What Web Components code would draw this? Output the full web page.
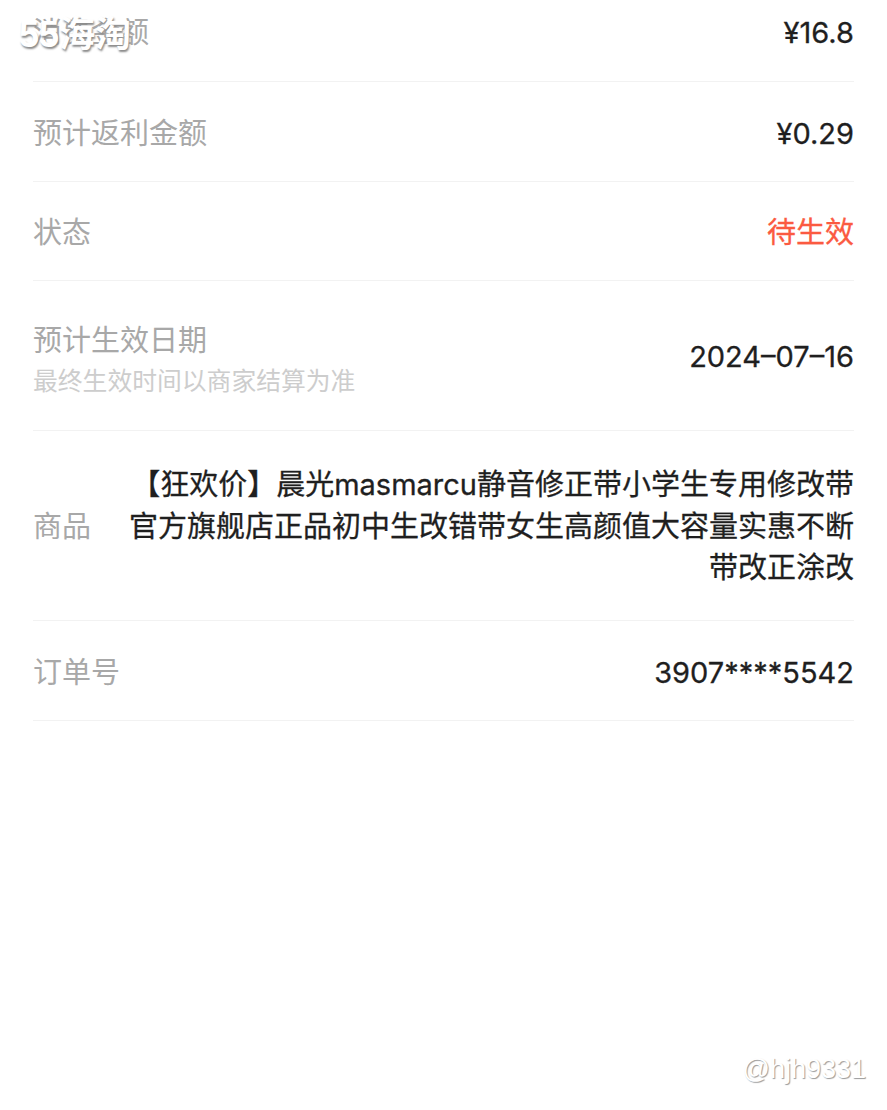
<!DOCTYPE html>
<html lang="zh">
<head>
<meta charset="utf-8">
<title>订单详情</title>
<style>
  html, body { margin: 0; background: #fff; }
  body { font-family: Inter, "Noto Sans CJK SC", sans-serif; }
</style>
</head>
<body>
<order-page>
  <detail-row class="clipped" label="消费金额">¥16.8</detail-row>
  <detail-row label="预计返利金额">¥0.29</detail-row>
  <detail-row class="short" label="状态" tone="alert">待生效</detail-row>
  <detail-row label="预计生效日期" note="最终生效时间以商家结算为准">2024–07–16</detail-row>
  <detail-row label="商品" tone="long">【狂欢价】晨光masmarcu静音修正带小学生专用修改带官方旗舰店正品初中生改错带女生高颜值大容量实惠不断带改正涂改</detail-row>
  <detail-row label="订单号">3907****5542</detail-row>
</order-page>
<water-mark></water-mark>

<script>
class OrderPage extends HTMLElement {
    constructor() {
        super()
        this.shadowDOM = this.attachShadow({mode: "open"})
    }

    connectedCallback() {
        this.shadowDOM.innerHTML = `
            <style>
                :host {
                    display: flex;
                    flex-direction: column;
                    min-height: 1110px;
                    box-sizing: border-box;
                    padding: 0 33px;
                    background: #fff;
                }
            </style>
            <slot></slot>
        `;
    }
}

class DetailRow extends HTMLElement {
    constructor() {
        super()
        this.shadowDOM = this.attachShadow({mode: "open"})
    }

    connectedCallback() {
        const label = this.getAttribute("label") || ""
        const note = this.getAttribute("note")
        this.shadowDOM.innerHTML = `
            <style>
                :host {
                    display: flex;
                    align-items: center;
                    justify-content: space-between;
                    box-sizing: border-box;
                    min-height: 100px;
                    padding-top: 4px;
                    border-bottom: 1px solid #f2f2f2;
                    font-family: Inter, "Noto Sans CJK SC", sans-serif;
                }

                :host(.clipped) {
                    min-height: 82px;
                    padding-top: 0;
                    padding-bottom: 15px;
                }

                :host(.short) {
                    min-height: 99px;
                    padding-top: 3px;
                }

                :host([note]) {
                    min-height: 150px;
                    padding-top: 2px;
                }

                :host([note]) .text {
                    padding-top: 6px;
                }

                :host([tone="long"]) {
                    min-height: 190px;
                    padding-top: 2px;
                }

                .label {
                    flex: none;
                    font-size: 29px;
                    line-height: 40px;
                    color: #a8a8a8;
                }

                .note {
                    margin-top: 2px;
                    font-size: 24.8px;
                    line-height: 36px;
                    color: #cdcdcd;
                }

                .value {
                    font-size: 29px;
                    line-height: 41.5px;
                    color: #1f1f1f;
                    -webkit-text-stroke: 0.3px currentColor;
                    text-align: right;
                }

                :host([tone="alert"]) .value {
                    color: #fb5a41;
                }

                :host([tone="long"]) .value {
                    width: 728px;
                }
            </style>
            <div class="text">
                <div class="label">${label}</div>
                ${note ? `<div class="note">${note}</div>` : ""}
            </div>
            <div class="value"><slot></slot></div>
        `;
    }
}

class WaterMark extends HTMLElement {
    constructor() {
        super()
        this.shadowDOM = this.attachShadow({mode: "open"})
    }

    connectedCallback() {
        this.shadowDOM.innerHTML = `
            <style>
                .brand, .user {
                    position: absolute;
                    color: #fff;
                    font-family: "Liberation Sans", "Noto Sans CJK SC", sans-serif;
                    white-space: nowrap;
                }

                .brand {
                    left: 19px;
                    top: 13px;
                    font-size: 36px;
                    line-height: 44px;
                    font-weight: 700;
                    text-shadow: 1px 2px 2px #8a8a8a;
                }

                .user {
                    right: 21px;
                    top: 1053px;
                    font-size: 27px;
                    line-height: 32px;
                    text-shadow: 1px 1px 1px #9a9a9a;
                }
            </style>
            <div class="brand">55海淘</div>
            <div class="user">@hjh9331</div>
        `;
    }
}

customElements.define('order-page', OrderPage);
customElements.define('detail-row', DetailRow);
customElements.define('water-mark', WaterMark);
</script>
</body>
</html>
